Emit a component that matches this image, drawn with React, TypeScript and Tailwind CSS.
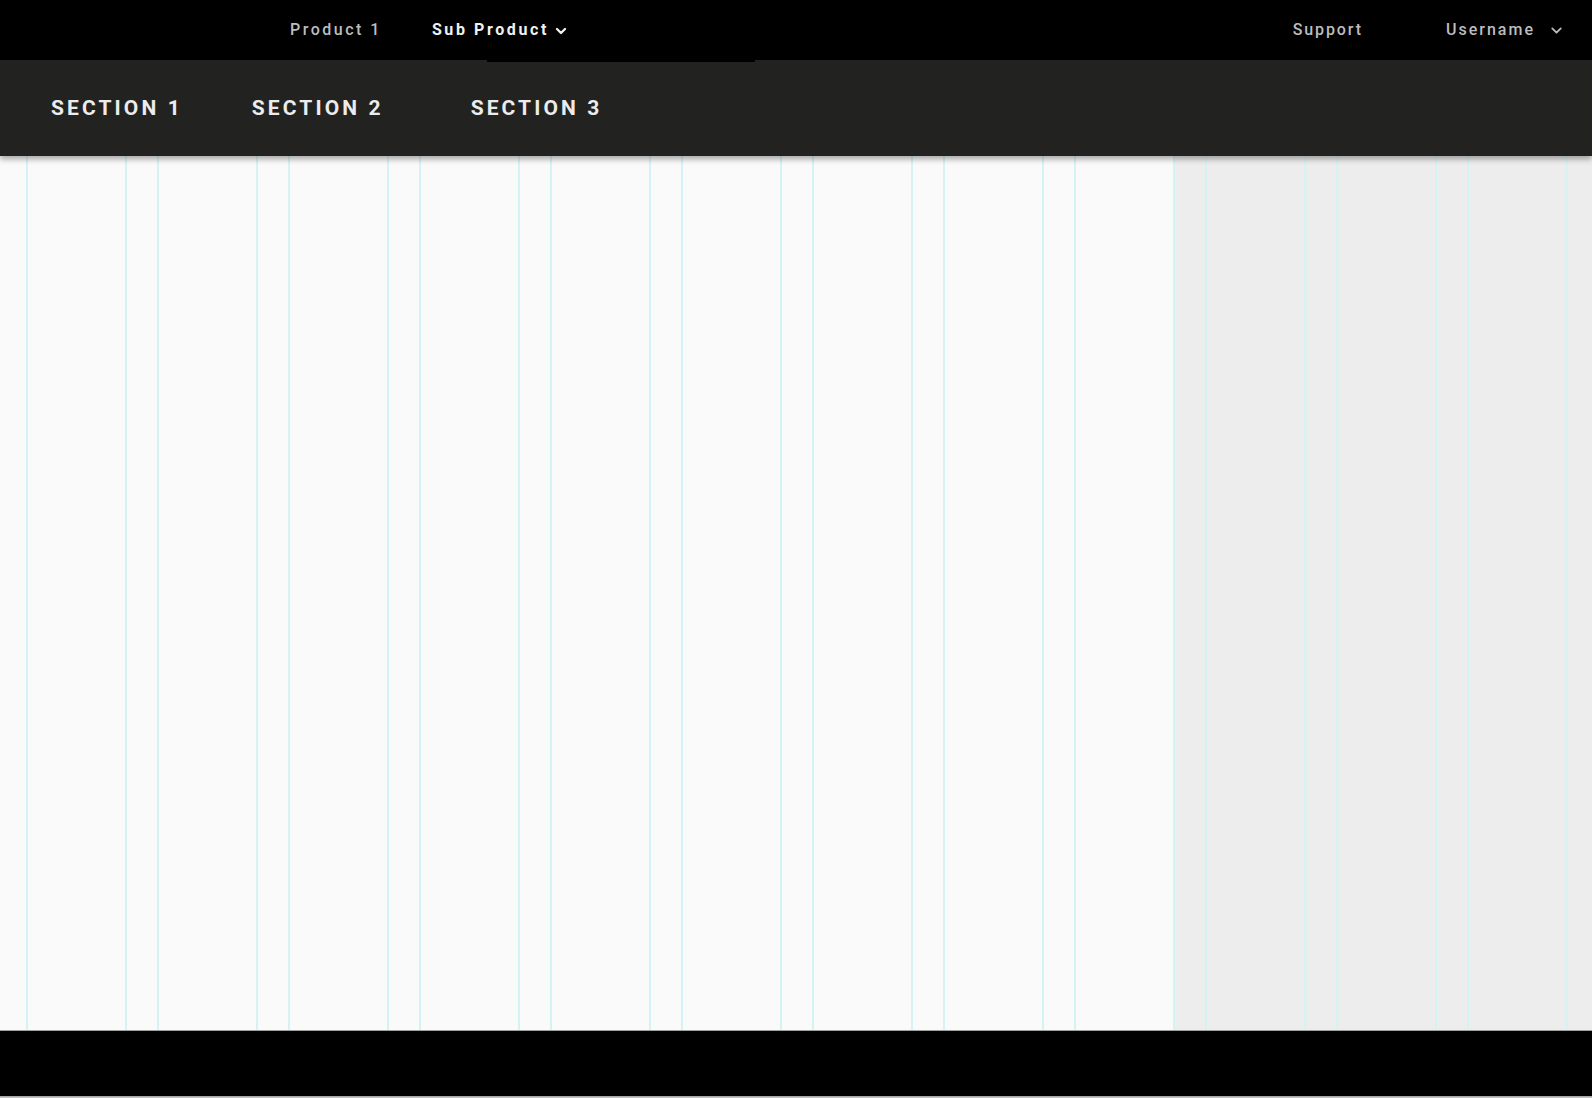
import { ChevronDown } from 'lucide-react'

const font = { fontFamily: 'Roboto, "Liberation Sans", sans-serif' }

function TopNav() {
  return (
    <div className="relative z-20 flex h-[60px] items-center bg-black pl-[290px] pr-[27px] text-[16px] font-medium">
      <span className="tracking-[2.5px] text-[#bdbdbd]">Product 1</span>
      <div className="relative ml-[50px] flex h-full items-center font-bold tracking-[2.6px] text-[#f0f0f0]">
        <span>Sub Product</span>
        <ChevronDown size={16} strokeWidth={3.5} className="ml-[4px] mt-[1px]" />
        {/* active tab sits a couple px into the section bar */}
        <div className="absolute left-[55px] top-[58px] h-[4px] w-[268px] bg-black" />
      </div>
      <span className="ml-auto tracking-[1.9px] text-[#bdbdbd]">Support</span>
      <span className="ml-[83px] tracking-[2px] text-[#bdbdbd]">Username</span>
      <ChevronDown size={17} strokeWidth={2.5} className="ml-[13px] text-[#bdbdbd]" />
    </div>
  )
}

function SectionBar() {
  return (
    <div className="relative z-10 flex h-[96px] items-center bg-[#222221] pl-[51px] pt-[2px] text-[21px] font-bold tracking-[3.1px] text-[#ececec] shadow-[0_3px_6px_rgba(0,0,0,0.35)]">
      <span>SECTION 1</span>
      <span className="ml-[69px]">SECTION 2</span>
      <span className="ml-[87px]">SECTION 3</span>
    </div>
  )
}

function GridOverlay() {
  const cols = Array.from({ length: 12 })
  return (
    <div className="pointer-events-none absolute inset-0 grid grid-cols-12 gap-x-[30px] pl-[26px] pr-[24px]">
      {cols.map((_, i) => (
        <div key={i} className="border-x-2 border-[#d5f3f7]" />
      ))}
    </div>
  )
}

export default function App() {
  return (
    <div className="flex h-[1098px] w-[1592px] flex-col overflow-hidden bg-[#fafafa]" style={font}>
      <TopNav />
      <SectionBar />
      <div className="relative flex flex-1">
        <div className="flex-1 bg-[#fafafa]" />
        <div className="w-[418px] bg-[#ededed]" />
        <GridOverlay />
      </div>
      <div className="h-[66px] border-t border-[#a0a0a0] bg-black" />
      <div className="h-[2px] bg-gradient-to-b from-[#9a9a9a] to-[#d0d0d0]" />
    </div>
  )
}
